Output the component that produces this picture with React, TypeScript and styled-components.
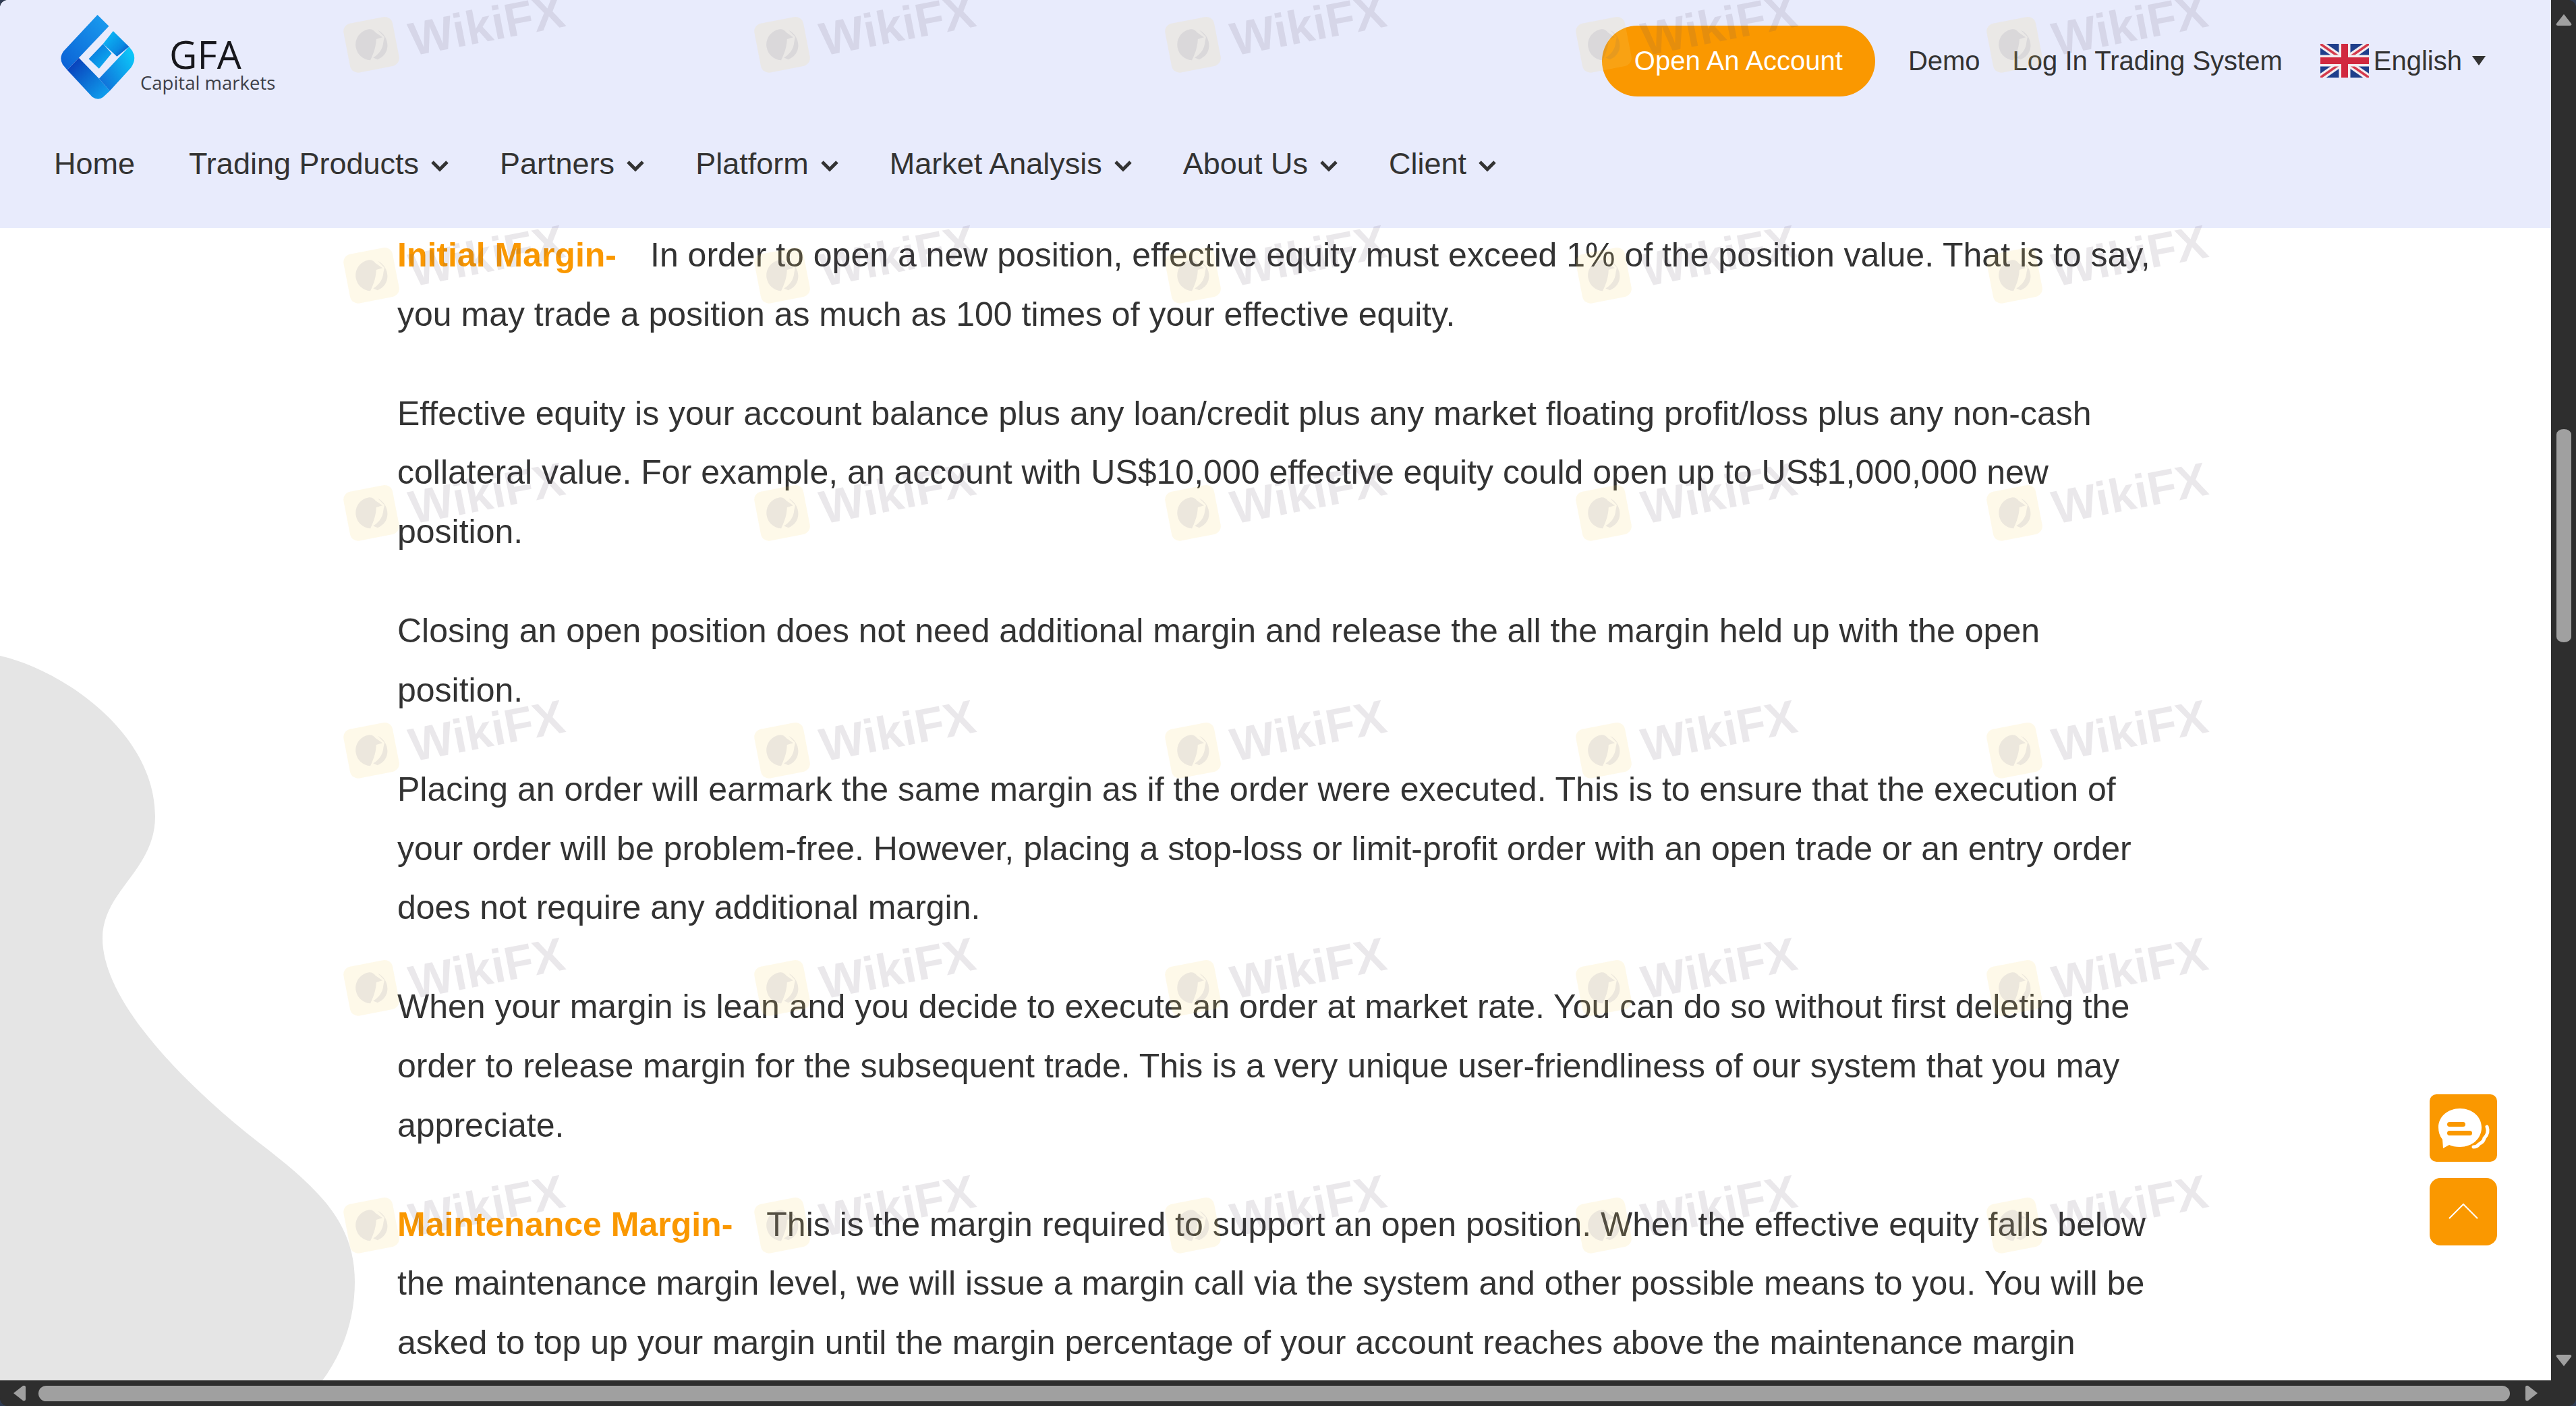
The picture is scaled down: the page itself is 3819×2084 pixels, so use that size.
import React from "react";
import styled, { createGlobalStyle } from "styled-components";

const GlobalStyle = createGlobalStyle`
  html, body { margin: 0; padding: 0; background: #2f3b52; overflow: hidden; }
  * { box-sizing: border-box; }
`;

const ORANGE = "#fa9800";
const TEXT = "#333333";

const Shell = styled.div`
  width: 3819px;
  height: 2084px;
  display: grid;
  grid-template-columns: 3782px 37px;
  grid-template-rows: 2046px 38px;
  background: #2e2e2e;
  border-radius: 12px;
  overflow: hidden;
  font-family: "Liberation Sans", Arial, sans-serif;
  color: ${TEXT};
`;

const Page = styled.div`
  position: relative;
  overflow: hidden;
  background: #ffffff;
  display: flex;
  flex-direction: column;
`;

const Blob = styled.svg`
  position: absolute;
  left: 0;
  top: 960px;
  width: 540px;
  height: 1086px;
`;

const Header = styled.header`
  position: relative;
  z-index: 1;
  flex: 0 0 338px;
  background: #e8ebfc;
`;

const TopRow = styled.div`
  height: 180px;
  display: flex;
  align-items: center;
  padding: 0 97px 0 88px;
`;

const Logo = styled.a`
  align-self: flex-start;
  margin-top: 20px;
  display: flex;
  gap: 7px;
`;

const LogoWords = styled.div`
  display: flex;
  flex-direction: column;
  font-family: "Open Sans", sans-serif;
`;

const LogoName = styled.span`
  margin: 35px 0 0 43px;
  font-size: 57px;
  line-height: 50px;
  color: #17171c;
`;

const LogoTag = styled.span`
  margin-top: 2px;
  font-size: 27.5px;
  line-height: 32px;
  color: #3d3f48;
`;

const AccountButton = styled.a`
  margin-left: auto;
  width: 405px;
  height: 105px;
  border-radius: 53px;
  background: ${ORANGE};
  color: #ffffff;
  font-size: 40px;
  display: flex;
  align-items: center;
  justify-content: center;
`;

const TopLink = styled.a<{ $gap: number }>`
  margin-left: ${(p) => p.$gap}px;
  font-size: 40px;
  color: ${TEXT};
`;

const Language = styled.div`
  margin-left: 56px;
  display: flex;
  align-items: center;
  font-size: 40px;
`;

const Flag = styled.svg`
  width: 72px;
  height: 50px;
  margin-right: 7px;
`;

const Caret = styled.span`
  margin-left: 15px;
  width: 0;
  height: 0;
  border-left: 10px solid transparent;
  border-right: 10px solid transparent;
  border-top: 14px solid ${TEXT};
`;

const Nav = styled.nav`
  height: 126px;
  display: flex;
  align-items: center;
  gap: 75px;
  padding-left: 80px;
`;

const NavItem = styled.a<{ $plain?: boolean }>`
  display: flex;
  align-items: center;
  gap: 17px;
  font-size: 45px;
  color: ${TEXT};
  margin-right: ${(p) => (p.$plain ? 5 : 0)}px;
`;

const Chevron = styled.svg`
  width: 28px;
  height: 19px;
  margin-top: 4px;
`;

const Article = styled.main`
  width: 2620px;
  margin: -3px 0 0 589px;
  position: relative;
`;

const Para = styled.p`
  margin: 0 0 59.3px;
  font-size: 50px;
  line-height: 87.7px;
  color: ${TEXT};
`;

const Lead = styled.strong`
  color: ${ORANGE};
  margin-right: 50px;
`;

const Watermarks = styled.div`
  position: absolute;
  inset: 0;
  z-index: 2;
  pointer-events: none;
  display: grid;
  grid-template-columns: repeat(5, 609px);
  grid-template-rows: 342px;
  grid-auto-rows: 352px;
  padding-left: 511px;
`;

const Mark = styled.div`
  display: flex;
  align-items: center;
  gap: 20px;
  height: 80px;
  width: 350px;
  transform: rotate(-11deg);
`;

const MarkBadge = styled.div`
  flex: 0 0 74px;
  height: 74px;
  border-radius: 12px;
  background: rgba(250, 215, 120, 0.16);
  display: flex;
  align-items: center;
  justify-content: center;
`;

const MarkEagle = styled.svg`
  width: 58px;
  height: 58px;
`;

const MarkName = styled.span`
  margin-top: 8px;
  font-size: 70px;
  line-height: 80px;
  font-weight: 700;
  color: rgba(90, 80, 100, 0.13);
  white-space: nowrap;
`;

const FloatBar = styled.div`
  position: absolute;
  z-index: 3;
  right: 80px;
  bottom: 200px;
  display: flex;
  flex-direction: column;
  gap: 24px;
`;

const FloatButton = styled.button<{ $radius: number }>`
  width: 100px;
  height: 100px;
  padding: 0;
  border: 0;
  border-radius: ${(p) => p.$radius}px;
  background: ${ORANGE};
  display: block;
`;

const FloatIcon = styled.svg`
  display: block;
  width: 100px;
  height: 100px;
`;

const VerticalBar = styled.div`
  background: #2e2e2e;
  display: flex;
  flex-direction: column;
  align-items: center;
  padding-top: 20px;
`;

const ArrowIcon = styled.svg<{ $w: number; $h: number }>`
  width: ${(p) => p.$w}px;
  height: ${(p) => p.$h}px;
  flex: none;
`;

const VerticalThumb = styled.div`
  width: 22px;
  height: 316px;
  margin: 598px 0 1056px;
  border-radius: 11px / 8px;
  background: #a0a0a0;
`;

const HorizontalBar = styled.div`
  background: #2e2e2e;
  display: flex;
  align-items: center;
  padding-left: 19px;
`;

const HorizontalThumb = styled.div`
  width: 3664px;
  height: 23px;
  margin: 0 23px 0 19px;
  border-radius: 12px;
  background: #a0a0a0;
`;

const Corner = styled.div`
  background: #2e2e2e;
`;

const LogoMark = () => (
  <svg width="113" height="128" viewBox="85 30 340 385" style={{ flex: "none" }}>
    <defs>
      <linearGradient id="lgA" x1="0" y1="1" x2="1" y2="0">
        <stop offset="0" stopColor="#0b5fd4" />
        <stop offset="1" stopColor="#1a9ff0" />
      </linearGradient>
      <linearGradient id="lgB" x1="0" y1="0" x2="1" y2="1">
        <stop offset="0" stopColor="#0833b4" />
        <stop offset="1" stopColor="#10a8f2" />
      </linearGradient>
      <linearGradient id="lgC" x1="0" y1="1" x2="1" y2="0.3">
        <stop offset="0" stopColor="#1164d4" />
        <stop offset="1" stopColor="#0cc4f8" />
      </linearGradient>
      <linearGradient id="lgD" x1="0" y1="0" x2="1" y2="1">
        <stop offset="0" stopColor="#0cc2fa" />
        <stop offset="0.65" stopColor="#0a8ae2" />
        <stop offset="1" stopColor="#0a3cb8" />
      </linearGradient>
      <linearGradient id="lgE" x1="0" y1="0" x2="1" y2="1">
        <stop offset="0" stopColor="#0a6cd8" />
        <stop offset="1" stopColor="#0cb8f5" />
      </linearGradient>
    </defs>
    <path d="M255 36 L306 86 L172 228 L120 282 L100 258 Q82 228 104 198 Z" fill="url(#lgA)" />
    <path d="M120 282 L172 228 L262 320 L310 375 L280 403 Q258 420 232 402 Z" fill="url(#lgB)" />
    <path d="M262 320 L396 178 L410 196 Q432 232 404 272 L310 375 Z" fill="url(#lgC)" />
    <path d="M325 108 L396 178 L342 222 L280 165 Z" fill="url(#lgD)" />
    <path d="M280 165 L318 208 L262 276 L216 232 Z" fill="url(#lgE)" />
  </svg>
);

const UnionJack = () => (
  <Flag viewBox="0 0 72 50" preserveAspectRatio="none">
    <rect width="72" height="50" fill="#1f3f8c" />
    <path d="M0 0 L72 50 M72 0 L0 50" stroke="#f3eef0" strokeWidth="10" />
    <path d="M0 0 L72 50 M72 0 L0 50" stroke="#d43a4c" strokeWidth="3.5" />
    <path d="M36 0 V50 M0 25 H72" stroke="#f3eef0" strokeWidth="17" />
    <path d="M36 0 V50 M0 25 H72" stroke="#d1293f" strokeWidth="10" />
  </Flag>
);

const NavChevron = () => (
  <Chevron viewBox="0 0 28 19">
    <path d="M3 4 L14 15 L25 4" fill="none" stroke={TEXT} strokeWidth="5" />
  </Chevron>
);

const Eagle = () => (
  <MarkEagle viewBox="0 0 60 60">
    <path
      d="M6 30 C6 16 17 6 30 6 C35 6 38 9 40 13 L49 22 L39 23 C37 32 33 41 24 53 C13 50 6 41 6 30 Z"
      fill="rgba(95,95,125,0.11)"
    />
    <path
      d="M44 10 C52 16 56 26 54 36 C52 46 45 52 35 54 L29 50 C39 46 46 40 49 29 L52 22 Z"
      fill="rgba(95,95,125,0.11)"
    />
  </MarkEagle>
);

const navItems = ["Trading Products", "Partners", "Platform", "Market Analysis", "About Us", "Client"];

export default function App() {
  return (
    <>
      <GlobalStyle />
      <Shell>
        <Page>
          <Blob viewBox="0 960 540 1086">
            <path
              fill="#e5e5e5"
              d="M0 972 C90 992 230 1085 230 1210 C230 1290 152 1320 152 1391 C152 1470 240 1580 383 1693 C470 1760 526 1810 526 1900 C526 1960 505 2010 478 2046 L0 2046 Z"
            />
          </Blob>
          <Header>
            <TopRow>
              <Logo>
                <LogoMark />
                <LogoWords>
                  <LogoName>GFA</LogoName>
                  <LogoTag>Capital markets</LogoTag>
                </LogoWords>
              </Logo>
              <AccountButton>Open An Account</AccountButton>
              <TopLink $gap={49}>Demo</TopLink>
              <TopLink $gap={48}>Log In Trading System</TopLink>
              <Language>
                <UnionJack />
                English
                <Caret />
              </Language>
            </TopRow>
            <Nav>
              <NavItem $plain>Home</NavItem>
              {navItems.map((item) => (
                <NavItem key={item}>
                  {item}
                  <NavChevron />
                </NavItem>
              ))}
            </Nav>
          </Header>
          <Article>
            <Para>
              <Lead>Initial Margin-</Lead>
              In order to open a new position, effective equity must exceed 1% of the position value. That is to say,
              you may trade a position as much as 100 times of your effective equity.
            </Para>
            <Para>
              Effective equity is your account balance plus any loan/credit plus any market floating profit/loss plus
              any non-cash collateral value. For example, an account with US$10,000 effective equity could open up to
              US$1,000,000 new position.
            </Para>
            <Para>
              Closing an open position does not need additional margin and release the all the margin held up with the
              open position.
            </Para>
            <Para>
              Placing an order will earmark the same margin as if the order were executed. This is to ensure that the
              execution of your order will be problem-free. However, placing a stop-loss or limit-profit order with an
              open trade or an entry order does not require any additional margin.
            </Para>
            <Para>
              When your margin is lean and you decide to execute an order at market rate. You can do so without first
              deleting the order to release margin for the subsequent trade. This is a very unique user-friendliness of
              our system that you may appreciate.
            </Para>
            <Para>
              <Lead>Maintenance Margin-</Lead>
              This is the margin required to support an open position. When the effective equity falls below the
              maintenance margin level, we will issue a margin call via the system and other possible means to you. You
              will be asked to top up your margin until the margin percentage of your account reaches above the
              maintenance margin
            </Para>
          </Article>
          <Watermarks>
            {Array.from({ length: 30 }, (_, i) => (
              <Mark key={i}>
                <MarkBadge>
                  <Eagle />
                </MarkBadge>
                <MarkName>WikiFX</MarkName>
              </Mark>
            ))}
          </Watermarks>
          <FloatBar>
            <FloatButton $radius={10}>
              <FloatIcon viewBox="0 0 100 100">
                <path
                  d="M45 21 C63 21 77 33 77 49 C77 66 63 78 45 78 C38 78 33 77 29 75 L20 80 L19 67 C15 62 13 56 13 49 C13 33 27 21 45 21 Z"
                  fill="#fff"
                />
                <rect x="26" y="41" width="27" height="7" rx="3.5" fill={ORANGE} />
                <rect x="26" y="54" width="37" height="7" rx="3.5" fill={ORANGE} />
                <path
                  d="M85 48 C88 56 84 62 81 65 C80 71 76 72 73 74 C71 77 68 78 65 78"
                  fill="none"
                  stroke="#fff"
                  strokeWidth="5"
                  strokeLinecap="round"
                />
              </FloatIcon>
            </FloatButton>
            <FloatButton $radius={16}>
              <FloatIcon viewBox="0 0 100 100">
                <path d="M29 60 L50 39 L71 60" fill="none" stroke="#fff" strokeWidth="2" />
              </FloatIcon>
            </FloatButton>
          </FloatBar>
        </Page>
        <VerticalBar>
          <ArrowIcon $w={24} $h={18} viewBox="0 0 24 18">
            <path d="M12 1 L23 15 Q24 18 21 18 L3 18 Q0 18 1 15 Z" fill="#a0a0a0" />
          </ArrowIcon>
          <VerticalThumb />
          <ArrowIcon $w={24} $h={18} viewBox="0 0 24 18">
            <path d="M12 17 L23 3 Q24 0 21 0 L3 0 Q0 0 1 3 Z" fill="#a0a0a0" />
          </ArrowIcon>
        </VerticalBar>
        <HorizontalBar>
          <ArrowIcon $w={19} $h={24} viewBox="0 0 19 24">
            <path d="M1 12 L15 1 Q19 0 19 3 L19 21 Q19 24 15 23 Z" fill="#a0a0a0" />
          </ArrowIcon>
          <HorizontalThumb />
          <ArrowIcon $w={19} $h={24} viewBox="0 0 19 24">
            <path d="M18 12 L4 1 Q0 0 0 3 L0 21 Q0 24 4 23 Z" fill="#a0a0a0" />
          </ArrowIcon>
        </HorizontalBar>
        <Corner />
      </Shell>
    </>
  );
}
